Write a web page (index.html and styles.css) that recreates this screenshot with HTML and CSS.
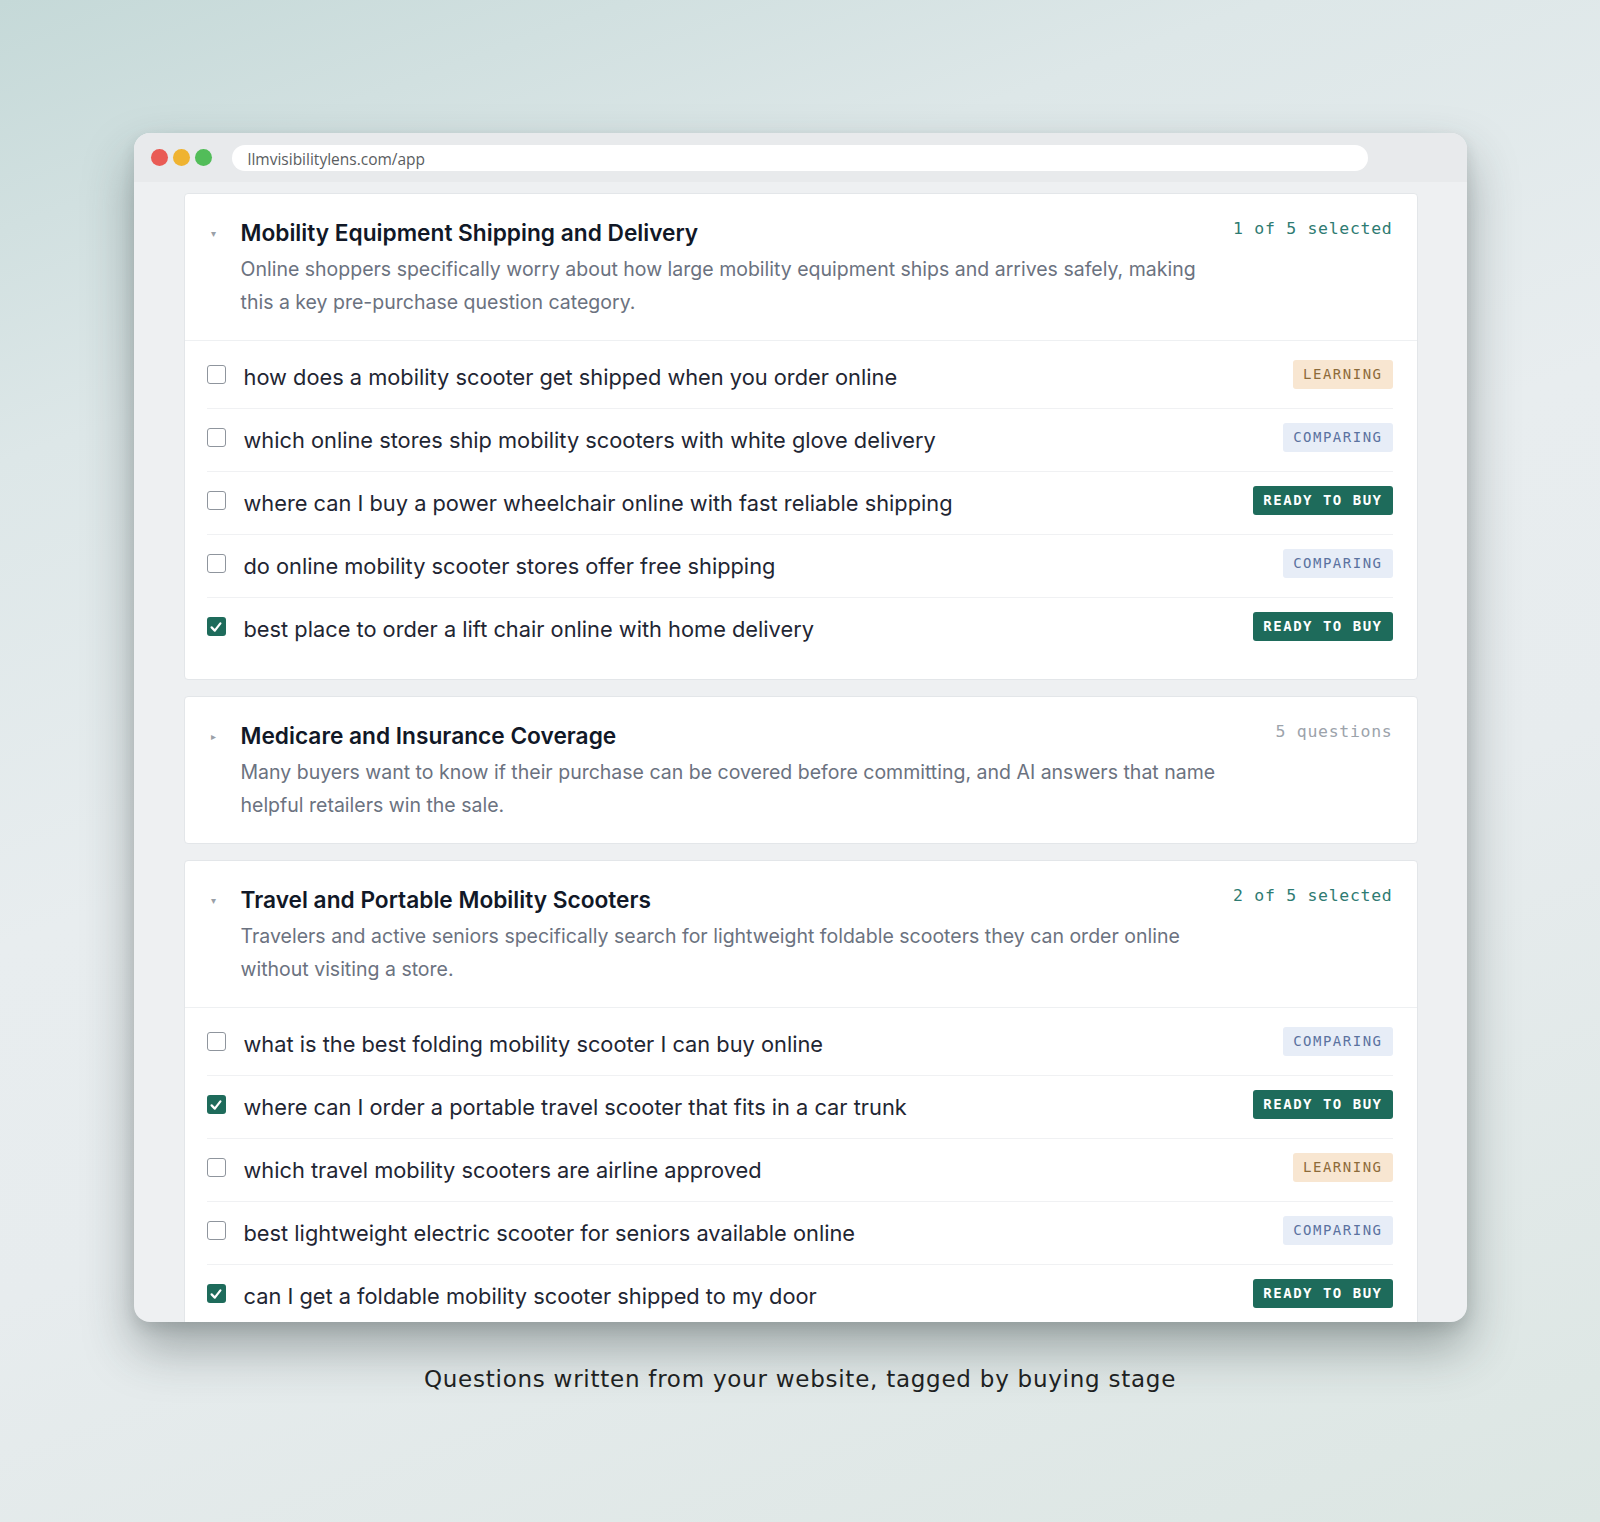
FILE: index.html
```html
<!DOCTYPE html>
<html lang="en">
<head>
<meta charset="utf-8">
<title>LLM Visibility Lens – Questions</title>
<link rel="stylesheet" href="styles.css">
</head>
<body>
<main class="stage">
  <div class="window">
    <div class="titlebar">
      <div class="lights">
        <span class="light light-red"></span>
        <span class="light light-yellow"></span>
        <span class="light light-green"></span>
      </div>
      <div class="url">llmvisibilitylens.com/app</div>
    </div>

    <div class="viewport">
      <section class="group">
        <header class="group-head">
          <span class="caret">▾</span>
          <div class="group-info">
            <h2 class="group-title">Mobility Equipment Shipping and Delivery</h2>
            <p class="group-desc">Online shoppers specifically worry about how large mobility equipment ships and arrives safely, making this a key pre-purchase question category.</p>
          </div>
          <span class="count count-selected">1 of 5 selected</span>
        </header>
        <ul class="questions">
          <li class="question"><span class="check"></span><span class="q-text">how does a mobility scooter get shipped when you order online</span><span class="tag tag-learning">LEARNING</span></li>
          <li class="question"><span class="check"></span><span class="q-text">which online stores ship mobility scooters with white glove delivery</span><span class="tag tag-comparing">COMPARING</span></li>
          <li class="question"><span class="check"></span><span class="q-text">where can I buy a power wheelchair online with fast reliable shipping</span><span class="tag tag-ready">READY TO BUY</span></li>
          <li class="question"><span class="check"></span><span class="q-text">do online mobility scooter stores offer free shipping</span><span class="tag tag-comparing">COMPARING</span></li>
          <li class="question"><span class="check check-on"><svg viewBox="0 0 20 20" width="16" height="16"><polyline points="4.5,10.5 8.5,14.5 15.5,5.5" fill="none" stroke="#fff" stroke-width="2.8" stroke-linecap="round" stroke-linejoin="round"/></svg></span><span class="q-text">best place to order a lift chair online with home delivery</span><span class="tag tag-ready">READY TO BUY</span></li>
        </ul>
      </section>

      <section class="group">
        <header class="group-head">
          <span class="caret">▸</span>
          <div class="group-info">
            <h2 class="group-title">Medicare and Insurance Coverage</h2>
            <p class="group-desc">Many buyers want to know if their purchase can be covered before committing, and AI answers that name helpful retailers win the sale.</p>
          </div>
          <span class="count count-muted">5 questions</span>
        </header>
      </section>

      <section class="group">
        <header class="group-head">
          <span class="caret">▾</span>
          <div class="group-info">
            <h2 class="group-title">Travel and Portable Mobility Scooters</h2>
            <p class="group-desc">Travelers and active seniors specifically search for lightweight foldable scooters they can order online without visiting a store.</p>
          </div>
          <span class="count count-selected">2 of 5 selected</span>
        </header>
        <ul class="questions">
          <li class="question"><span class="check"></span><span class="q-text">what is the best folding mobility scooter I can buy online</span><span class="tag tag-comparing">COMPARING</span></li>
          <li class="question"><span class="check check-on"><svg viewBox="0 0 20 20" width="16" height="16"><polyline points="4.5,10.5 8.5,14.5 15.5,5.5" fill="none" stroke="#fff" stroke-width="2.8" stroke-linecap="round" stroke-linejoin="round"/></svg></span><span class="q-text">where can I order a portable travel scooter that fits in a car trunk</span><span class="tag tag-ready">READY TO BUY</span></li>
          <li class="question"><span class="check"></span><span class="q-text">which travel mobility scooters are airline approved</span><span class="tag tag-learning">LEARNING</span></li>
          <li class="question"><span class="check"></span><span class="q-text">best lightweight electric scooter for seniors available online</span><span class="tag tag-comparing">COMPARING</span></li>
          <li class="question"><span class="check check-on"><svg viewBox="0 0 20 20" width="16" height="16"><polyline points="4.5,10.5 8.5,14.5 15.5,5.5" fill="none" stroke="#fff" stroke-width="2.8" stroke-linecap="round" stroke-linejoin="round"/></svg></span><span class="q-text">can I get a foldable mobility scooter shipped to my door</span><span class="tag tag-ready">READY TO BUY</span></li>
        </ul>
      </section>
    </div>
  </div>

  <p class="caption">Questions written from your website, tagged by buying stage</p>
</main>
</body>
</html>
```

FILE: styles.css
```css
* {
  box-sizing: border-box;
}

html,
body {
  margin: 0;
  padding: 0;
}

body {
  width: 1600px;
  height: 1522px;
  overflow: hidden;
  font-family: Inter, Roboto, "Noto Sans", sans-serif;
  background: linear-gradient(160deg, #c5d9d8 0%, #dde7e8 22%, #e8edef 45%, #e7ecee 62%, #dce6e3 100%);
}

.stage {
  display: flex;
  flex-direction: column;
  align-items: center;
  padding-top: 133px;
}

/* browser window */
.window {
  width: 1333px;
  height: 1189px;
  display: flex;
  flex-direction: column;
  border-radius: 16px;
  overflow: hidden;
  background: #eef0f2;
  box-shadow: 0 26px 50px rgba(40, 52, 52, 0.38), 0 6px 14px rgba(40, 52, 52, 0.12);
}

.titlebar {
  height: 49px;
  flex: none;
  display: flex;
  align-items: center;
  padding-left: 17px;
  padding-right: 99px;
  background: #e8eaec;
}

.lights {
  display: flex;
  gap: 5px;
  margin-right: 20px;
}

.light {
  width: 17px;
  height: 17px;
  border-radius: 50%;
}

.light-red { background: #e95b55; }
.light-yellow { background: #efb331; }
.light-green { background: #52bd59; }

.url {
  flex: 1;
  height: 26px;
  border-radius: 13px;
  background: #ffffff;
  padding-left: 16px;
  padding-top: 1px;
  font-family: "Open Sans", sans-serif;
  font-size: 15.5px;
  line-height: 26px;
  color: #5a5d61;
}

.viewport {
  flex: 1;
  display: flex;
  flex-direction: column;
  gap: 16px;
  padding: 11px 49px 0 50px;
  overflow: hidden;
}

/* question groups */
.group {
  flex: none;
  background: #ffffff;
  border: 1px solid #e3e6e9;
  border-radius: 4px;
}

.group-head {
  display: flex;
  align-items: flex-start;
  padding: 24px 24px 21px 22px;
}

.caret {
  width: 34px;
  flex: none;
  padding-left: 4px;
  font-size: 10px;
  line-height: 30px;
  color: #9aa0a8;
}

.group-info {
  flex: 1;
  min-width: 0;
  padding-right: 30px;
}

.group-title {
  margin: 0;
  font-size: 22.7px;
  font-weight: 600;
  line-height: 30px;
  color: #111827;
}

.group-desc {
  margin: 5px 0 0;
  font-size: 19.5px;
  line-height: 33px;
  color: #6b7280;
}

.count {
  flex: none;
  font-family: "DejaVu Sans Mono", monospace;
  font-size: 16.5px;
  letter-spacing: 0.7px;
  line-height: 22px;
}

.count-selected { color: #2e7b72; }
.count-muted { color: #9ca3ab; }

.questions {
  list-style: none;
  margin: 0;
  padding: 5px 24px 19px 22px;
  border-top: 1px solid #eef0f2;
}

.question {
  height: 63px;
  display: flex;
  align-items: center;
  border-bottom: 1px solid #f0f1f3;
}

.question:last-child {
  height: 62px;
  border-bottom: none;
}

.check {
  width: 19px;
  height: 19px;
  flex: none;
  margin-top: -5px;
  margin-right: 18px;
  border: 1.7px solid #8f959d;
  border-radius: 3px;
  display: flex;
  align-items: center;
  justify-content: center;
}

.check-on {
  border: none;
  background: #1e6b5b;
}

.q-text {
  flex: 1;
  font-size: 21.8px;
  color: #1f2633;
}

.tag {
  flex: none;
  height: 29px;
  padding: 0 10px;
  margin-top: -6px;
  border-radius: 3px;
  font-family: "DejaVu Sans Mono", monospace;
  font-size: 14px;
  font-weight: bold;
  letter-spacing: 1.5px;
  line-height: 29px;
}

.tag-learning {
  background: #f8e6d1;
  color: #8d6b3a;
  font-weight: normal;
}

.tag-comparing {
  background: #e7edf7;
  color: #5b72a0;
  font-weight: normal;
}

.tag-ready {
  background: #1e6b5b;
  color: #ffffff;
}

.caption {
  margin: 44px 0 0;
  font-family: "DejaVu Sans", sans-serif;
  font-size: 23px;
  letter-spacing: 0.75px;
  line-height: 27px;
  color: #1d2222;
}
```
